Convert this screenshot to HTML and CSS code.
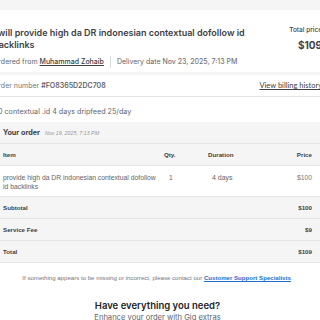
FILE: index.html
```html
<!DOCTYPE html>
<html>
<head>
<meta charset="utf-8">
<link rel="stylesheet" href="styles.css">
</head>
<body>
<div class="page">
  <div class="card">
    <div class="head">
      <div class="head-main">
        <h1 class="title">I will provide high da DR indonesian contextual dofollow id backlinks</h1>
        <div class="meta">Ordered from&nbsp;<a class="seller" href="#">Muhammad Zohaib</a><span class="sep"></span>Delivery date&nbsp;<b>Nov 23, 2025, 7:13 PM</b></div>
      </div>
      <div class="head-price">
        <div class="price-label">Total price</div>
        <div class="price-value">$109</div>
      </div>
    </div>
  </div>
  <div class="card body-card">
    <div class="order-row">
      <div class="order-num">Order number <b>#FO8365D2DC708</b></div>
      <a class="billing" href="#">View billing history</a>
    </div>
    <div class="desc">10 contextual .id 4 days dripfeed 25/day</div>
    <div class="table">
      <div class="your-order"><b>Your order</b><i>Nov 19, 2025, 7:13 PM</i></div>
      <div class="row thead">
        <span class="c-item">Item</span><span class="c-qty">Qty.</span><span class="c-dur">Duration</span><span class="c-price">Price</span>
      </div>
      <div class="row item">
        <span class="c-item">provide high da DR indonesian contextual dofollow id backlinks</span><span class="c-qty">1</span><span class="c-dur">4 days</span><span class="c-price">$100</span>
      </div>
      <div class="row sum"><span class="c-item">Subtotal</span><span class="c-price">$100</span></div>
      <div class="row sum"><span class="c-item">Service Fee</span><span class="c-price">$9</span></div>
      <div class="row sum"><span class="c-item">Total</span><span class="c-price">$109</span></div>
    </div>
    <p class="note">If something appears to be missing or incorrect, please contact our <a href="#">Customer Support Specialists</a>.</p>
    <div class="extras">
      <h2>Have everything you need?</h2>
      <p>Enhance your order with Gig extras</p>
    </div>
  </div>
</div>
</body>
</html>
```
FILE: styles.css
```css
html, body {
  margin: 0;
  padding: 0;
  background: #f5f5f5;
  overflow: hidden;
}
body {
  width: 320px;
  height: 320px;
  font-family: "Inter", "Liberation Sans", sans-serif;
  color: #404145;
}
.page {
  margin-left: -7px;
  width: 329px;
  padding-top: 10px;
}
.card {
  background: #fff;
}
.head {
  display: flex;
  gap: 20px;
  padding: 17px 0 5px 0;
  height: 40px;
}
.head-main {
  flex: 1;
}
.title {
  margin: 0;
  font-size: 9px;
  line-height: 11.5px;
  font-weight: 600;
  color: #404145;
}
.meta {
  margin-top: 6px;
  font-size: 7px;
  line-height: 10px;
  color: #62646a;
  display: flex;
  align-items: center;
  white-space: nowrap;
}
.meta b {
  font-weight: 500;
  color: #74767e;
}
.seller {
  color: #404145;
  text-decoration: underline;
  font-weight: 500;
}
.sep {
  display: inline-block;
  width: 1px;
  height: 12px;
  background: #dadbdd;
  margin: 0 6px;
}
.head-price {
  width: 40px;
  text-align: right;
  white-space: nowrap;
}
.price-label {
  font-size: 6.5px;
  line-height: 10px;
  margin-top: -2px;
  font-weight: 500;
}
.price-value {
  font-size: 10px;
  line-height: 14px;
  margin-top: 3px;
  font-weight: 700;
}
.body-card {
  margin-top: 3px;
}
.order-row {
  display: flex;
  justify-content: space-between;
  align-items: center;
  height: 21px;
  border-bottom: 1px solid #e4e5e7;
  font-size: 7px;
  color: #74767e;
}
.order-num b {
  color: #62646a;
  font-weight: 600;
}
.billing {
  font-family: "Lato", sans-serif;
  color: #404145;
  text-decoration: underline;
  font-size: 7.5px;
  white-space: nowrap;
}
.desc {
  padding: 10px 0 5px 2px;
  font-size: 7.2px;
  line-height: 10px;
  color: #62646a;
}
.table {
  font-family: "Liberation Sans", Arial, sans-serif;
  font-size: 6.2px;
}
.your-order {
  background: #f5f5f5;
  height: 21px;
  display: flex;
  align-items: center;
  gap: 5px;
  padding: 0 10px;
  border-bottom: 1px solid #e4e5e7;
}
.your-order b {
  font-family: "Inter", sans-serif;
  font-size: 7.2px;
  font-weight: 700;
  color: #404145;
}
.your-order i {
  font-size: 5.3px;
  color: #95979d;
}
.row {
  display: flex;
  align-items: center;
  padding: 0 10px;
  border-bottom: 1px solid #e4e5e7;
  color: #404145;
}
.thead {
  height: 21px;
  background: #f5f5f5;
  font-weight: 700;
  color: #404145;
}
.item {
  align-items: flex-start;
  padding-top: 7px;
  box-sizing: border-box;
  height: 31px;
  line-height: 9px;
  color: #62646a;
  font-size: 6.8px;
}
.sum {
  height: 21px;
  background: #f5f5f5;
  font-weight: 700;
}
.c-item {
  width: 161px;
  flex: none;
  padding-right: 4px;
  box-sizing: border-box;
}
.c-qty {
  width: 44px;
  flex: none;
}
.c-dur {
  width: 40px;
  flex: none;
}
.c-price {
  flex: 1;
  text-align: right;
}
.item .c-qty {
  padding-left: 5px;
  box-sizing: border-box;
}
.item .c-dur {
  padding-left: 4px;
  box-sizing: border-box;
  font-size: 7px;
}
.item .c-price {
  color: #74767e;
}
.note {
  margin: 0;
  padding: 11px 0 0;
  text-align: center;
  font-family: "Liberation Sans", Arial, sans-serif;
  font-size: 6.1px;
  line-height: 8px;
  color: #74767e;
}
.note a {
  color: #1d6fd1;
  font-weight: 700;
  text-decoration: underline;
}
.extras {
  text-align: center;
  padding-top: 18px;
}
.extras h2 {
  margin: 0;
  font-size: 9.5px;
  line-height: 12px;
  font-weight: 600;
  color: #222325;
}
.extras p {
  margin: 0;
  font-size: 7.6px;
  line-height: 12px;
  color: #62646a;
}
```
